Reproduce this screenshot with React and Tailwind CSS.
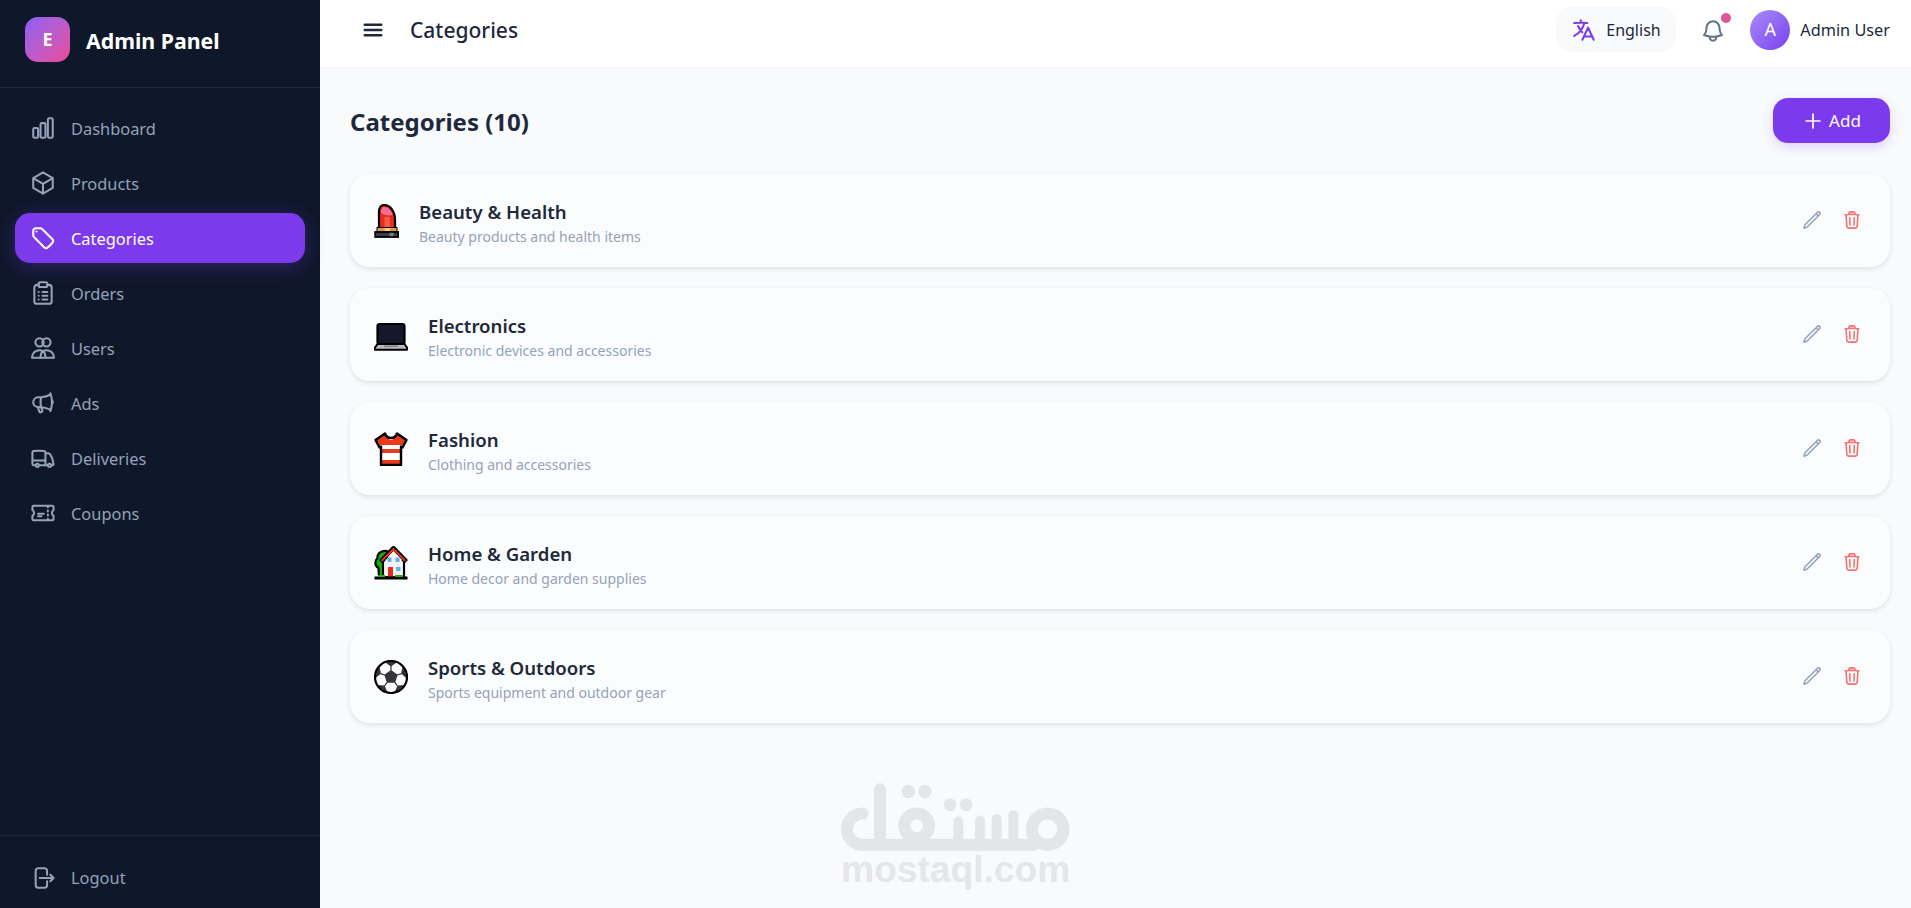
import React from "react";
import {
  HiOutlineChartBar, HiOutlineCube, HiOutlineTag, HiOutlineMegaphone,
  HiOutlineTruck, HiOutlineTicket, HiOutlineArrowRightOnRectangle, HiOutlineBars3, HiOutlineLanguage,
  HiOutlineBell, HiOutlinePlus, HiOutlinePencil, HiOutlineTrash,
} from "react-icons/hi2";

const UsersGlyph = ({ className }) => (
  <svg viewBox="0 0 24 24" fill="none" stroke="currentColor" strokeWidth="2" strokeLinecap="round" strokeLinejoin="round" className={className}>
    <circle cx="8.800" cy="6.800" r="3.800" />
    <circle cx="15.200" cy="6.800" r="3.800" />
    <path d="M1.800 21c0-4 3.200-7 7-7 1.200 0 2.300.3 3.200.8.900-.5 2-.8 3.200-.8 3.800 0 7 3 7 7z" />
    <path d="M12 14.800c1.500 1.200 2.300 3.200 2.300 6.200M12 14.800c-1.500 1.200-2.300 3.200-2.300 6.200" />
  </svg>
);

const OrdersGlyph = ({ className }) => (
  <svg viewBox="0 0 24 24" fill="none" stroke="currentColor" strokeWidth="2" strokeLinecap="round" strokeLinejoin="round" className={className}>
    <path d="M8 4.500H6.500A2.500 2.500 0 0 0 4 7v12.500A2.500 2.500 0 0 0 6.500 22h11a2.500 2.500 0 0 0 2.500-2.500V7a2.500 2.500 0 0 0-2.500-2.500H16" />
    <rect x="8" y="2" width="8" height="4.500" rx="1.500" />
    <path d="M8 11h.01M8 14.500h.01M8 18h.01M11.500 11H16M11.500 14.500H16M11.500 18H16" />
  </svg>
);

const Lipstick = () => (
  <svg viewBox="0 0 25 34" className="w-[25px] h-[34px] shrink-0">
    <path d="M5 25V8c0-4 2-7 5-7 6 0 11 6 11 15v9z" fill="#ea2a1a" stroke="#000" strokeWidth="2.200" />
    <path d="M7 9c0-3.500 1-6 3.500-6 3.500 0 7 3.500 8 8-3.500 1-8.500 0-11.500-2z" fill="#f0709a" />
    <rect x="10.500" y="13" width="5.500" height="11" fill="#f25b4c" />
    <rect x="3" y="23.500" width="20" height="4.500" fill="#e09a3e" stroke="#000" strokeWidth="1" />
    <rect x="10.500" y="24" width="5.500" height="3.500" fill="#f8c98a" />
    <rect x="1.200" y="28" width="23" height="5" fill="#3b3b4d" stroke="#000" strokeWidth="1.800" />
    <rect x="15.500" y="28.800" width="4" height="3.400" fill="#7a8290" />
  </svg>
);

const Laptop = () => (
  <svg viewBox="0 0 34 34" className="w-[34px] h-[34px] shrink-0">
    <rect x="3.500" y="6" width="27" height="20" rx="2" fill="#17172a" stroke="#000" strokeWidth="2.200" />
    <path d="M3.500 26h27l2.800 4c.4.700-.1 1.800-1 1.800H1.700c-.9 0-1.400-1.100-1-1.800z" fill="#bdb9c2" stroke="#000" strokeWidth="2" strokeLinejoin="round" />
    <rect x="10" y="27.500" width="14" height="1.500" fill="#85828c" />
  </svg>
);

const Shirt = () => {
  const outline = "M11 1.500 1.500 8l4 7.500L7 14.500V33h20V14.500l1.500 1L32.500 8 23 1.500c-1 3-3 4.500-6 4.500s-5-1.500-6-4.500z";
  return (
    <svg viewBox="0 0 34 34" className="w-[34px] h-[34px] shrink-0">
      <defs>
        <clipPath id="shirtClip"><path d={outline} /></clipPath>
      </defs>
      <g clipPath="url(#shirtClip)">
        <rect width="34" height="34" fill="#fff" />
        <rect y="0" width="34" height="13" fill="#ea3a1e" />
        <rect y="17" width="34" height="4" fill="#ea3a1e" />
        <rect y="28" width="34" height="6" fill="#ea3a1e" />
        <path d="M12 2c1 3.500 3 6 5 6s4-2.500 5-6z" fill="#fff" />
      </g>
      <path d={outline} fill="none" stroke="#000" strokeWidth="2.400" strokeLinejoin="round" />
    </svg>
  );
};

const HomeGarden = () => (
  <svg viewBox="0 0 34 34" className="w-[34px] h-[34px] shrink-0">
    <path d="M13 5C7 4 3 8 3.500 12 .5 15 .5 20 4.500 22L5 31h9z" fill="#17b000" stroke="#000" strokeWidth="2.200" strokeLinejoin="round" />
    <rect x="9" y="15" width="21" height="16" fill="#f4f4f8" stroke="#000" strokeWidth="2.200" />
    <path d="M6.500 15.500 19.500 2 32.500 15.500" fill="none" stroke="#000" strokeWidth="4" strokeLinejoin="round" />
    <path d="M7.500 15 19.500 3l12 12" fill="none" stroke="#ea3a1e" strokeWidth="1.800" />
    <path d="M10.500 15.500 19.500 5.500l9 10V30h-18z" fill="#f4f4f8" />
    <rect x="13.500" y="11.500" width="4" height="4.500" fill="#5ab4f5" />
    <rect x="21.500" y="11.500" width="4" height="4.500" fill="#5ab4f5" />
    <rect x="22" y="21" width="4.500" height="4" fill="#5ab4f5" />
    <rect x="14" y="21" width="5" height="10" fill="#ea2a1a" />
    <rect x="0.500" y="30.500" width="33" height="3" fill="#000" />
    <path d="M4 29h7v2H4zM21 29h8v2h-8z" fill="#22b50c" />
  </svg>
);

const Ball = () => (
  <svg viewBox="0 0 34 34" className="w-[34px] h-[34px] shrink-0">
    <circle cx="17" cy="17" r="16" fill="#fbfbfd" />
    <g fill="#34343f">
      <path d="M17 10 23.700 14.800 21.100 22.700H12.900L10.300 14.800z" />
      <path d="M10 1.500 24 1.500 17 6.500z" />
      <path d="M29 5 33.500 19 27 13.500z" />
      <path d="M31.500 25 20 33.500 23.500 25.500z" />
      <path d="M2.500 25 14 33.500 10.500 25.500z" />
      <path d="M5 5 .5 19 7 13.500z" />
    </g>
    <path d="M17 6v4.500M27.500 13.600 23.200 15M23.500 25.900l-2.700-3.600M10.500 25.900l2.700-3.600M6.500 13.600 10.800 15" stroke="#34343f" strokeWidth="1.200" />
    <circle cx="17" cy="17" r="16" fill="none" stroke="#000" strokeWidth="2.200" />
  </svg>
);

const nav = [
  ["Dashboard", HiOutlineChartBar],
  ["Products", HiOutlineCube],
  ["Categories", HiOutlineTag, true],
  ["Orders", OrdersGlyph],
  ["Users", UsersGlyph],
  ["Ads", HiOutlineMegaphone],
  ["Deliveries", HiOutlineTruck],
  ["Coupons", HiOutlineTicket],
];

const cats = [
  ["Beauty & Health", "Beauty products and health items", Lipstick],
  ["Electronics", "Electronic devices and accessories", Laptop],
  ["Fashion", "Clothing and accessories", Shirt],
  ["Home & Garden", "Home decor and garden supplies", HomeGarden],
  ["Sports & Outdoors", "Sports equipment and outdoor gear", Ball],
];

const Watermark = () => (
  <div className="absolute left-[841px] top-[783px] w-[229px] pointer-events-none">
    <svg viewBox="183 100 687 206" className="w-[229px] h-[69px] block" fill="none" stroke="#e3e5e8" strokeWidth="36" strokeLinecap="round">
      <circle cx="803" cy="238" r="47" />
      <path d="M248 191a47 47 0 1 0 0 94h514" />
      <path d="M300 118v165" />
      <circle cx="410" cy="228" r="37" />
      <path d="M535 215v60M600 212v60M650 208v60M700 196v70" strokeWidth="30" />
      <circle cx="385" cy="125" r="20" fill="#e3e5e8" stroke="none" />
      <circle cx="435" cy="125" r="20" fill="#e3e5e8" stroke="none" />
      <circle cx="510" cy="165" r="19" fill="#e3e5e8" stroke="none" />
      <circle cx="558" cy="165" r="19" fill="#e3e5e8" stroke="none" />
    </svg>
    <div className="text-[37.2px] leading-[40px] font-bold text-[#e4e6e9] whitespace-nowrap -mt-[3px]" style={{ fontFamily: '"Liberation Sans", sans-serif' }}>mostaql.com</div>
  </div>
);

export default function App() {
  return (
    <div className="relative flex h-screen overflow-hidden bg-[#f8fafc] text-[#1e293b] font-['Noto_Sans',sans-serif]">
      <aside className="w-[320px] shrink-0 bg-[#0f172a] flex flex-col">
        <div className="h-[88px] shrink-0 flex items-center gap-4 px-[25px] pb-[8px] border-b border-[#1e293b]">
          <div className="w-[45px] h-[45px] rounded-[13px] bg-gradient-to-br from-[#8b5cf6] to-[#ec4899] flex items-center justify-center text-white font-bold text-[18px]">E</div>
          <span className="text-white font-bold text-[21.3px] pt-[3px]">Admin Panel</span>
        </div>
        <nav className="flex-1 flex flex-col gap-[5px] px-[15px] pt-[15px]">
          {nav.map(([label, Icon, active]) => (
            <div key={label} className={`h-[50px] shrink-0 flex items-center gap-4 px-4 rounded-[15px] text-[16.4px] ${active ? "bg-[#7c3aed] text-white shadow-[0_4px_20px_rgba(124,58,237,0.3)]" : "text-[#94a3b8]"}`}>
              <Icon className="w-[26px] h-[26px] -mx-[1px] shrink-0 [stroke-width:1.9]" />
              <span className="pt-[2px]">{label}</span>
            </div>
          ))}
        </nav>
        <div className="h-[73px] shrink-0 border-t border-[#1e293b] px-[31px] pt-[12px] flex items-center gap-4 text-[16.4px] text-[#94a3b8]">
          <HiOutlineArrowRightOnRectangle className="w-[26px] h-[26px] -mx-[1px] shrink-0 [stroke-width:1.9]" />
          <span>Logout</span>
        </div>
      </aside>
      <div className="flex-1 flex flex-col min-w-0">
        <header className="h-[68px] shrink-0 bg-white border-b border-[#f1f5f9] flex items-center pl-[41px] pr-[21px] pb-[8px]">
          <HiOutlineBars3 className="w-6 h-6 text-[#1e293b] shrink-0 [stroke-width:2.5]" />
          <h1 className="ml-[25px] text-[21px] font-medium pt-[3px]">Categories</h1>
          <div className="ml-auto flex items-center">
            <div className="h-[45px] w-[120px] rounded-[15px] bg-[#f8fafc] flex items-center pl-[15px] gap-[9px] text-[16px]">
              <HiOutlineLanguage className="w-[26px] h-[26px] text-[#7c3aed] shrink-0 [stroke-width:1.9]" />
              <span className="pt-[1px]">English</span>
            </div>
            <div className="relative ml-[25px] w-6 h-6 text-[#64748b]">
              <HiOutlineBell className="w-[26px] h-[26px] -ml-[1px] [stroke-width:1.9]" />
              <span className="absolute -right-[6px] -top-[5px] w-[10px] h-[10px] rounded-full bg-[#e0559a]" />
            </div>
            <div className="ml-[25px] w-10 h-10 rounded-full bg-gradient-to-br from-[#a78bfa] to-[#7c3aed] text-white flex items-center justify-center text-[18px]">A</div>
            <span className="ml-[10px] text-[16.3px] pt-[2px]">Admin User</span>
          </div>
        </header>
        <main className="flex-1 pl-[30px] pr-[21px] pt-[30px] min-h-0">
          <div className="flex items-center justify-between mb-[31px]">
            <h2 className="text-[24px] font-bold pt-[2px]">Categories (10)</h2>
            <button className="h-[45px] w-[117px] rounded-[15px] bg-[#7c3aed] text-white flex items-center justify-center gap-[5px] text-[17px] shadow-[0_4px_12px_rgba(124,58,237,0.2)]">
              <HiOutlinePlus className="w-[22px] h-[22px] [stroke-width:1.9]" />
              Add
            </button>
          </div>
          <div className="flex flex-col gap-[21px]">
            {cats.map(([title, sub, Emoji]) => (
              <div key={title} className="h-[93px] rounded-[20px] bg-[#fbfcfe] shadow-[0_2px_5px_rgba(0,0,0,0.1)] flex items-center pl-6 pr-[20px] gap-5">
                <Emoji />
                <div className="flex-1 min-w-0 pt-[4px]">
                  <div className="text-[18.6px] leading-[27px] font-semibold -mt-[1px]">{title}</div>
                  <div className="text-[14px] leading-[21px] text-[#94a3b8] mt-[1px]">{sub}</div>
                </div>
                <div className="flex items-center gap-1 pb-[2px]">
                  <span className="p-2 text-[#94a3b8]"><HiOutlinePencil className="w-5 h-5 [stroke-width:1.9]" /></span>
                  <span className="p-2 text-[#f87171]"><HiOutlineTrash className="w-5 h-5 [stroke-width:1.9]" /></span>
                </div>
              </div>
            ))}
          </div>
        </main>
      </div>
      <Watermark />
    </div>
  );
}
